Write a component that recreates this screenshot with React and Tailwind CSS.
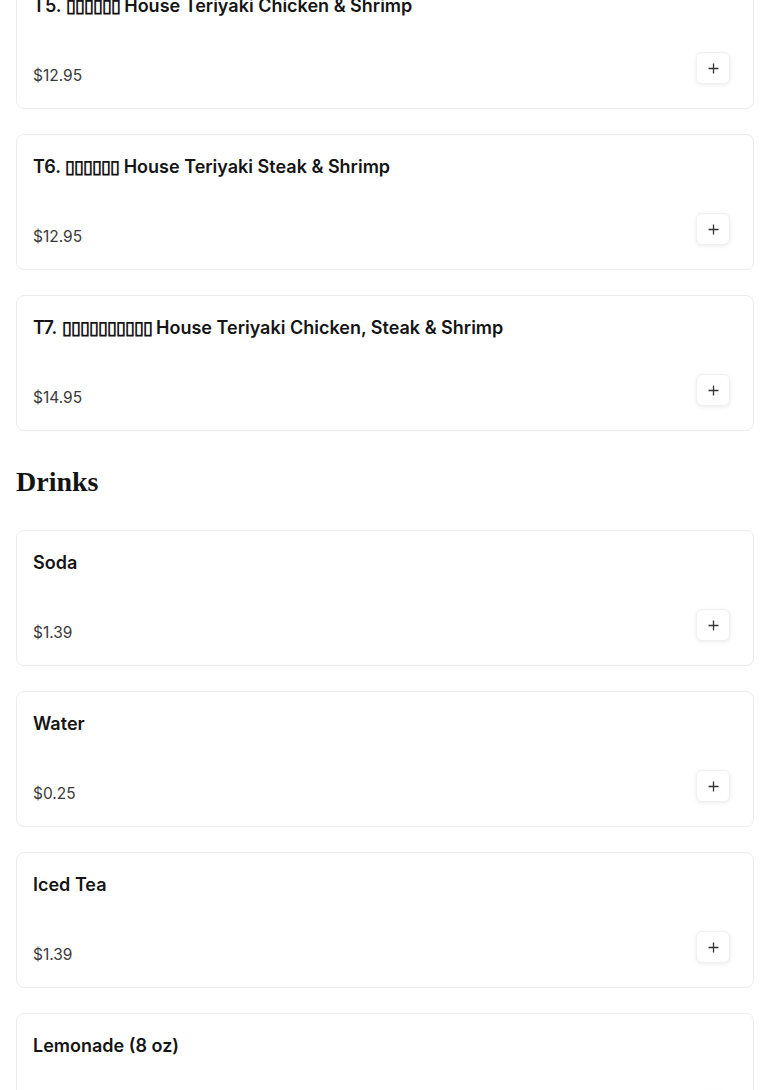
import React from 'react';

const teriyaki = [
  { code: 'T5.', cjk: '▯▯▯▯▯▯', name: 'House Teriyaki Chicken & Shrimp', price: '$12.95' },
  { code: 'T6.', cjk: '▯▯▯▯▯▯', name: 'House Teriyaki Steak & Shrimp', price: '$12.95' },
  { code: 'T7.', cjk: '▯▯▯▯▯▯▯▯▯▯', name: 'House Teriyaki Chicken, Steak & Shrimp', price: '$14.95' },
];

const drinks = [
  { name: 'Soda', price: '$1.39' },
  { name: 'Water', price: '$0.25' },
  { name: 'Iced Tea', price: '$1.39' },
  { name: 'Lemonade (8 oz)', price: '$1.39' },
];

const PlusIcon = () => (
  <svg width="11" height="11" viewBox="0 0 11 11" fill="none">
    <path d="M5.5 0.5v10M0.5 5.5h10" stroke="#333" strokeWidth="1.3" />
  </svg>
);

const MenuCard = ({ item }) => (
  <div className="flex flex-col rounded-lg border border-[#ececec] bg-white p-4">
    <h3 className="mt-[2px] text-[18px] font-semibold leading-[27px] text-[#151515]">
      {item.code && (
        <>
          {item.code} <span className="tracking-[-1px]">{item.cjk}</span>{' '}
        </>
      )}
      {item.name}
    </h3>
    <div className="mt-[33px] flex items-end justify-between pb-[6px]">
      <span className="mb-[-3px] text-[15.5px] leading-[27px] text-[#3a3a3a]">{item.price}</span>
      <button className="mb-[2px] mr-[7px] flex h-8 w-[34px] items-center justify-center rounded-md border border-[#f0f0f0] bg-white shadow-[0_1px_4px_rgba(0,0,0,0.08)]">
        <PlusIcon />
      </button>
    </div>
  </div>
);

export default function App() {
  return (
    <div className="min-h-screen overflow-hidden bg-white" style={{ fontFamily: 'Inter, "Noto Sans", sans-serif' }}>
      <div className="-mt-[27px] px-4">
        <div className="flex flex-col gap-[25px]">
          {teriyaki.map((item) => (
            <MenuCard key={item.code} item={item} />
          ))}
        </div>
        <h2
          className="mb-[31px] mt-[34px] text-[28px] font-bold leading-[34px] text-[#141414]"
          style={{ fontFamily: '"Liberation Serif", serif' }}
        >
          Drinks
        </h2>
        <div className="flex flex-col gap-[25px]">
          {drinks.map((item) => (
            <MenuCard key={item.name} item={item} />
          ))}
        </div>
      </div>
    </div>
  );
}
